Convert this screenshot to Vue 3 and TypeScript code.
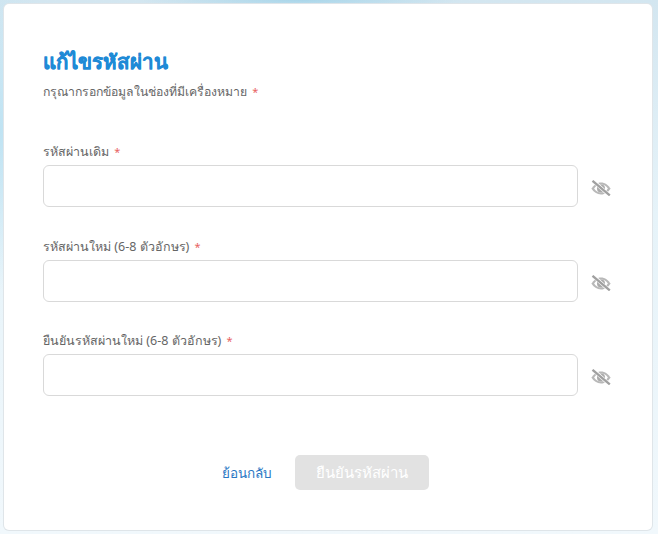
<script setup lang="ts">
interface Field {
  label: string
}

const fields: Field[] = [
  { label: 'รหัสผ่านเดิม' },
  { label: 'รหัสผ่านใหม่ (6-8 ตัวอักษร)' },
  { label: 'ยืนยันรหัสผ่านใหม่ (6-8 ตัวอักษร)' },
]
</script>

<template>
  <div class="page">
    <main class="card">
      <h1 class="title">แก้ไขรหัสผ่าน</h1>
      <p class="hint">กรุณากรอกข้อมูลในช่องที่มีเครื่องหมาย <span class="req">*</span></p>
      <form class="fields" @submit.prevent>
        <div v-for="f in fields" :key="f.label" class="field">
          <label class="label">{{ f.label }} <span class="req">*</span></label>
          <div class="row">
            <input class="input" type="password" />
            <svg class="eye" viewBox="0 0 20 16" width="20" height="16" aria-hidden="true">
              <path fill="#b8b8b8" d="M10 2.4C5.9 2.4 2.6 5 .4 8.6c2.2 3.6 5.5 6 9.6 6s7.4-2.4 9.6-6C17.4 5 14.1 2.4 10 2.4z" />
              <path fill="#fff" d="M10 4.6c-2.8 0-5.2 1.5-6.9 4 1.7 2.5 4.1 3.9 6.9 3.9s5.2-1.4 6.9-3.9c-1.7-2.5-4.1-4-6.9-4z" />
              <circle cx="10" cy="8.6" r="4" fill="#aaa" />
              <path d="M1.5 .2 18.5 15.6" stroke="#fff" stroke-width="3.6" fill="none" />
              <path d="M1.5 .8 18.8 15.4" stroke="#a0a0a0" stroke-width="2.3" fill="none" />
            </svg>
          </div>
        </div>
        <div class="actions">
          <a class="back" href="#">ย้อนกลับ</a>
          <button class="submit" type="button" disabled>ยืนยันรหัสผ่าน</button>
        </div>
      </form>
    </main>
  </div>
</template>

<style>
html, body { margin: 0; padding: 0; }
</style>

<style scoped>
.page {
  box-sizing: border-box;
  width: 658px;
  height: 534px;
  padding: 4px 6px 4px 4px;
  overflow: hidden;
  background:
    radial-gradient(60px 160px at 0 130px, #bfe3f3 0, transparent 100%),
    radial-gradient(160px 10px at 300px 0, #a9d6ea 0, transparent 100%),
    linear-gradient(180deg, #d3e6f0 0, #e6f3f9 40%, #f1f8fc 100%);
  font-family: "Noto Sans", "Liberation Sans", sans-serif;
}
.card {
  box-sizing: border-box;
  height: 526px;
  padding: 44px 40px 0 39px;
  background: #fff;
  border-radius: 5px;
  box-shadow: 0 0 0 1px #dfe5e9;
}
.title {
  margin: 0;
  font-size: 20.5px;
  line-height: 26px;
  font-weight: 700;
  color: #1f8ad6;
  -webkit-text-stroke: 0.3px #1f8ad6;
}
.hint {
  margin: 9px 0 0;
  font-size: 12.25px;
  line-height: 18px;
  color: #666;
}
.req {
  margin-left: 2px;
  font-size: 11px;
  color: #e8625f;
}
.fields {
  margin-top: 42px;
  display: flex;
  flex-direction: column;
  gap: 30.5px;
}
.label {
  display: block;
  font-size: 12.5px;
  line-height: 18px;
  color: #666;
}
.row {
  margin-top: 4px;
  display: flex;
  align-items: center;
  gap: 13px;
}
.input {
  box-sizing: border-box;
  width: 535px;
  height: 42px;
  border: 1px solid #d9d9d9;
  border-radius: 6px;
  background: #fff;
  outline: none;
}
.eye {
  flex: none;
  margin-top: 4px;
}
.actions {
  margin-top: 28.5px;
  display: flex;
  justify-content: center;
  align-items: center;
  gap: 23px;
  padding-right: 4px;
}
.back {
  font-size: 13.5px;
  color: #2a78c4;
  text-decoration: none;
}
.submit {
  width: 134px;
  height: 35px;
  border: 0;
  border-radius: 5px;
  background: #e2e2e2;
  color: #fff;
  font: 500 15px "Noto Sans", "Liberation Sans", sans-serif;
}
</style>
